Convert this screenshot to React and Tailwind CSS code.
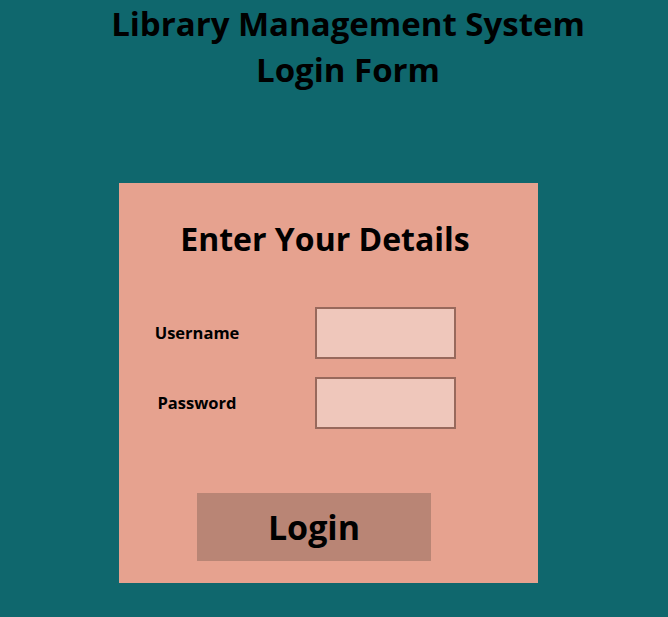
const inputClass =
  'h-[52px] w-[141px] border-2 border-[#98695c] bg-[#efc7bb] px-2 text-base outline-none'

const App = () => {
  return (
    <div
      className="min-h-screen bg-[#0f676d] pt-[1px] text-black"
      style={{ fontFamily: '"Open Sans", "Noto Sans", sans-serif' }}
    >
      <h1 className="pl-[28px] text-center text-[33px] font-bold leading-[46px]">
        Library Management System
        <br />
        Login Form
      </h1>

      <div className="ml-[119px] mt-[90px] flex h-[400px] w-[419px] flex-col bg-[#e6a28f]">
        <h2 className="mt-[36px] pr-[7px] text-center text-[32px] font-bold leading-[40px]">
          Enter Your Details
        </h2>

        <div className="mt-[48px] flex flex-col gap-[18px]">
          <div className="flex items-center">
            <label htmlFor="username" className="w-[156px] text-center text-[16.5px] font-bold">
              Username
            </label>
            <input id="username" type="text" className={`ml-[40px] ${inputClass}`} />
          </div>
          <div className="flex items-center">
            <label htmlFor="password" className="w-[156px] text-center text-[16.5px] font-bold">
              Password
            </label>
            <input id="password" type="password" className={`ml-[40px] ${inputClass}`} />
          </div>
        </div>

        <button
          type="button"
          className="ml-[78px] mt-[64px] h-[68px] w-[234px] bg-[#b98575] text-[34px] font-bold"
        >
          Login
        </button>
      </div>
    </div>
  )
}

export default App
